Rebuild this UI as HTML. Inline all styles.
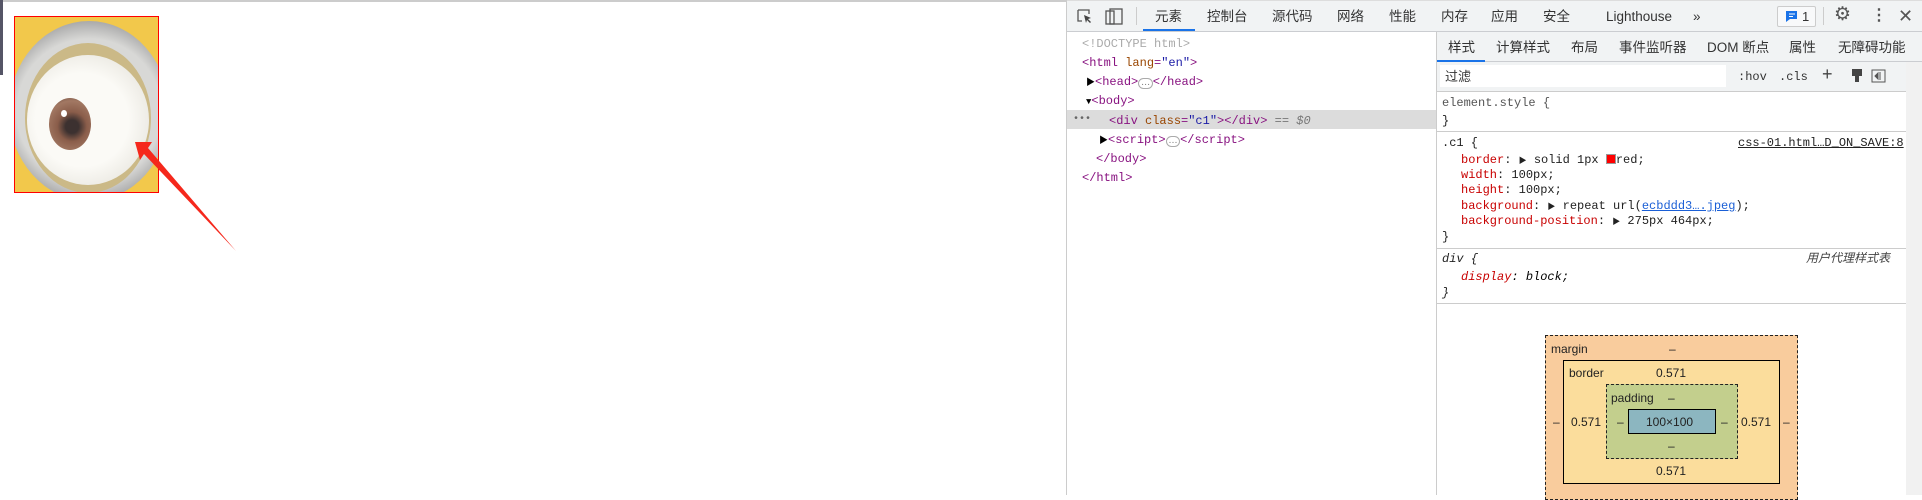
<!DOCTYPE html>
<html><head><meta charset="utf-8"><style>
*{margin:0;padding:0;box-sizing:border-box}
body{width:1922px;height:495px;position:relative;overflow:hidden;background:#fff;font-family:"Liberation Sans","Noto Sans CJK SC",sans-serif;}
.a{position:absolute;white-space:nowrap}
.m{font-family:"Liberation Mono","Noto Sans CJK SC",monospace;font-size:12px;line-height:14px}
.t{font-size:13.5px;color:#333;top:8px;line-height:18px}
.s{font-size:13.5px;color:#333;top:39px;line-height:18px}
.tag{color:#881280}.at{color:#994500}.av{color:#1a1aa6}.pn{color:#c80000}
.bm{font-family:"Liberation Sans",sans-serif;font-size:12px;color:#222;line-height:14px}
</style></head><body>
<div class="a" style="left:0;top:0;width:1066px;height:2px;background:#ccc"></div>
<div class="a" style="left:0;top:0;width:3px;height:75px;background:#556"></div>
<!-- eye image -->
<div class="a" style="left:14px;top:16px;width:145px;height:177px;border:1px solid red;background:#f2c84b;overflow:hidden">
<div class="a" style="left:-6px;top:4px;width:160px;height:180px;border-radius:50%;background:radial-gradient(circle,#d8d8d6 60%,#a9a9a9 75%,#c8c8c8 85%)"></div>
<div class="a" style="left:10px;top:26px;width:126px;height:150px;border-radius:50%;background:#cbb987"></div>
<div class="a" style="left:12px;top:38px;width:122px;height:130px;border-radius:50%;background:radial-gradient(circle at 45% 50%,#fbfaf6 50%,#e9e7e0 80%,#c9c5b9)"></div>
<div class="a" style="left:34px;top:81px;width:42px;height:52px;border-radius:50%;background:radial-gradient(circle at 55% 55%,#3c3130 18%,#8a5d4a 40%,#a27863 70%,#5a3a30 100%)"></div>
<div class="a" style="left:46px;top:93px;width:6px;height:7px;border-radius:50%;background:#fff"></div>
</div>
<svg class="a" style="left:0;top:0" width="1922" height="495">
<polygon points="135,142 152,142 148,148 236,251 144,154 140,160" fill="#f5281c"/>
<polygon points="1637,236 1622,232 1624,240 1528,283 1627,246 1628,252" fill="#f5281c"/>
</svg>
<!-- devtools -->
<div class="a" style="left:1066px;top:0;width:856px;height:495px;border-left:1px solid #ccc;background:#fff"></div>
<div class="a" style="left:1067px;top:0;width:855px;height:32px;background:#f1f3f4;border-bottom:1px solid #cbcdd1;border-top:1px solid #ddd"></div>
<svg class="a" style="left:1076px;top:8px" width="50" height="18"><path d="M2 2h11v4M2 2v11h4" fill="none" stroke="#555" stroke-width="1.3"/><path d="M8 7l7 3-3 1 3 3-1 1-3-3-1 3z" fill="#444"/><rect x="30" y="3" width="8" height="13" fill="none" stroke="#555" stroke-width="1.3"/><rect x="34" y="1" width="12" height="15" fill="none" stroke="#555" stroke-width="1.3"/></svg>
<div class="a" style="left:1136px;top:7px;width:1px;height:18px;background:#ccc"></div>
<div class="a t" style="left:1155px">元素</div>
<div class="a" style="left:1143px;top:29px;width:52px;height:2px;background:#1a73e8"></div>
<div class="a t" style="left:1207px">控制台</div>
<div class="a t" style="left:1272px">源代码</div>
<div class="a t" style="left:1337px">网络</div>
<div class="a t" style="left:1389px">性能</div>
<div class="a t" style="left:1441px">内存</div>
<div class="a t" style="left:1491px">应用</div>
<div class="a t" style="left:1543px">安全</div>
<div class="a t" style="left:1606px">Lighthouse</div>
<div class="a t" style="left:1693px">»</div>
<div class="a" style="left:1777px;top:6px;width:39px;height:21px;border:1px solid #ccc;border-radius:2px;background:#f8f9fa"></div>
<svg class="a" style="left:1785px;top:10px" width="14" height="14"><path d="M1 1h11v8H5l-4 3z" fill="#1a73e8"/><path d="M4 4h6M4 6.5h4" stroke="#fff"/></svg>
<div class="a" style="left:1802px;top:9px;font-size:13px;color:#333;line-height:16px">1</div>
<div class="a" style="left:1823px;top:7px;width:1px;height:18px;background:#ccc"></div>
<div class="a" style="left:1834px;top:4px;font-size:19px;color:#555;line-height:22px">⚙</div>
<div class="a" style="left:1871px;top:6px;font-size:16px;color:#555;font-weight:bold;line-height:20px">⋮</div>
<div class="a" style="left:1898px;top:5px;font-size:18px;color:#555;line-height:22px">✕</div>
<!-- elements tree -->
<div class="a" style="left:1067px;top:110px;width:369px;height:19px;background:#dcdcdc"></div>
<div class="a m" style="left:1082px;top:37px;color:#aaa">&lt;!DOCTYPE html&gt;</div>
<div class="a m" style="left:1082px;top:56px"><span class="tag">&lt;html</span> <span class="at">lang</span><span class="tag">=</span><span class="av">"en"</span><span class="tag">&gt;</span></div>
<div class="a m" style="left:1086px;top:75px"><span style="font-size:9px">▶</span><span class="tag">&lt;head&gt;</span><span style="color:#777;border:1px solid #aaa;border-radius:6px;font-size:8px;padding:0 2px">⋯</span><span class="tag">&lt;/head&gt;</span></div>
<div class="a m" style="left:1086px;top:94px"><span style="font-size:9px">▼</span><span class="tag">&lt;body&gt;</span></div>
<div class="a m" style="left:1073px;top:113px;color:#666;font-size:10px">•••</div>
<div class="a m" style="left:1109px;top:114px"><span class="tag">&lt;div</span> <span class="at">class</span><span class="tag">=</span><span class="av">"c1"</span><span class="tag">&gt;&lt;/div&gt;</span> <span style="color:#777">== <i>$0</i></span></div>
<div class="a m" style="left:1099px;top:133px"><span style="font-size:9px">▶</span><span class="tag">&lt;script&gt;</span><span style="color:#777;border:1px solid #aaa;border-radius:6px;font-size:8px;padding:0 2px">⋯</span><span class="tag">&lt;/script&gt;</span></div>
<div class="a m" style="left:1096px;top:152px"><span class="tag">&lt;/body&gt;</span></div>
<div class="a m" style="left:1082px;top:171px"><span class="tag">&lt;/html&gt;</span></div>
<!-- styles pane -->
<div class="a" style="left:1436px;top:32px;width:1px;height:463px;background:#ccc"></div>
<div class="a" style="left:1437px;top:32px;width:485px;height:30px;background:#f1f3f4;border-bottom:1px solid #cbcdd1"></div>
<div class="a s" style="left:1448px">样式</div>
<div class="a" style="left:1437px;top:60px;width:48px;height:2px;background:#1a73e8"></div>
<div class="a s" style="left:1496px">计算样式</div>
<div class="a s" style="left:1571px">布局</div>
<div class="a s" style="left:1619px">事件监听器</div>
<div class="a s" style="left:1707px">DOM 断点</div>
<div class="a s" style="left:1789px">属性</div>
<div class="a s" style="left:1838px">无障碍功能</div>
<div class="a" style="left:1906px;top:62px;width:16px;height:433px;background:#f1f1f1"></div>
<div class="a" style="left:1437px;top:62px;width:469px;height:30px;background:#f1f3f4;border-bottom:1px solid #ccc"></div>
<div class="a" style="left:1440px;top:65px;width:286px;height:22px;background:#fff"></div>
<div class="a" style="left:1445px;top:69px;font-size:13px;color:#333;line-height:16px">过滤</div>
<div class="a m" style="left:1738px;top:70px;color:#333">:hov</div>
<div class="a m" style="left:1779px;top:70px;color:#333">.cls</div>
<div class="a" style="left:1822px;top:64px;font-size:18px;color:#444;line-height:20px">+</div>
<svg class="a" style="left:1850px;top:68px" width="50" height="17"><rect x="2" y="1" width="10" height="7" fill="#444"/><rect x="5" y="8" width="4" height="6" fill="#444"/><rect x="22" y="2" width="13" height="12" fill="none" stroke="#555"/><path d="M30 4v8M28 5l-3 3 3 3z" fill="#555" stroke="#555"/></svg>
<div class="a m" style="left:1442px;top:96px;color:#555">element.style {</div>
<div class="a m" style="left:1442px;top:114px;color:#222">}</div>
<div class="a" style="left:1437px;top:131px;width:469px;height:1px;background:#ccc"></div>
<div class="a m" style="left:1442px;top:136px;color:#222">.c1 {</div>
<div class="a m" style="left:1738px;top:136px;color:#222;text-decoration:underline">css-01.html…D_ON_SAVE:8</div>
<div class="a m" style="left:1461px;top:153px;color:#222"><span class="pn">border</span>: <span style="font-size:8px">▶</span> solid 1px <span style="display:inline-block;width:10px;height:10px;background:red;vertical-align:-1px;border:1px solid #999"></span>red;</div>
<div class="a m" style="left:1461px;top:168px;color:#222"><span class="pn">width</span>: 100px;</div>
<div class="a m" style="left:1461px;top:183px;color:#222"><span class="pn">height</span>: 100px;</div>
<div class="a m" style="left:1461px;top:199px;color:#222"><span class="pn">background</span>: <span style="font-size:8px">▶</span> repeat url(<span style="color:#1a5fd6;text-decoration:underline">ecbddd3….jpeg</span>);</div>
<div class="a m" style="left:1461px;top:214px;color:#222"><span class="pn">background-position</span>: <span style="font-size:8px">▶</span> 275px 464px;</div>
<div class="a m" style="left:1442px;top:230px;color:#222">}</div>
<div class="a" style="left:1437px;top:248px;width:469px;height:1px;background:#ccc"></div>
<div class="a m" style="left:1442px;top:252px;color:#222;font-style:italic">div {</div>
<div class="a" style="left:1806px;top:251px;font-size:12px;color:#444;font-style:italic;line-height:14px">用户代理样式表</div>
<div class="a m" style="left:1461px;top:270px;font-style:italic"><span class="pn">display</span>: block;</div>
<div class="a m" style="left:1442px;top:286px;color:#222;font-style:italic">}</div>
<div class="a" style="left:1437px;top:303px;width:469px;height:1px;background:#ccc"></div>
<!-- box model -->
<div class="a" style="left:1545px;top:335px;width:253px;height:165px;background:#f9cc9d;border:1px dashed #222"></div>
<div class="a bm" style="left:1551px;top:342px">margin</div>
<div class="a bm" style="left:1669px;top:342px">–</div>
<div class="a" style="left:1563px;top:360px;width:217px;height:124px;background:#fbdd9c;border:1px solid #000"></div>
<div class="a bm" style="left:1569px;top:366px">border</div>
<div class="a bm" style="left:1656px;top:366px">0.571</div>
<div class="a" style="left:1606px;top:384px;width:132px;height:75px;background:#c3cf8d;border:1px dashed #222"></div>
<div class="a bm" style="left:1611px;top:391px">padding</div>
<div class="a bm" style="left:1668px;top:391px">–</div>
<div class="a" style="left:1628px;top:409px;width:88px;height:25px;background:#8cb6c0;border:1px solid #000"></div>
<div class="a bm" style="left:1646px;top:415px">100×100</div>
<div class="a bm" style="left:1553px;top:415px">–</div>
<div class="a bm" style="left:1571px;top:415px">0.571</div>
<div class="a bm" style="left:1617px;top:415px">–</div>
<div class="a bm" style="left:1721px;top:415px">–</div>
<div class="a bm" style="left:1741px;top:415px">0.571</div>
<div class="a bm" style="left:1783px;top:415px">–</div>
<div class="a bm" style="left:1668px;top:439px">–</div>
<div class="a bm" style="left:1656px;top:464px">0.571</div>
</body></html>
